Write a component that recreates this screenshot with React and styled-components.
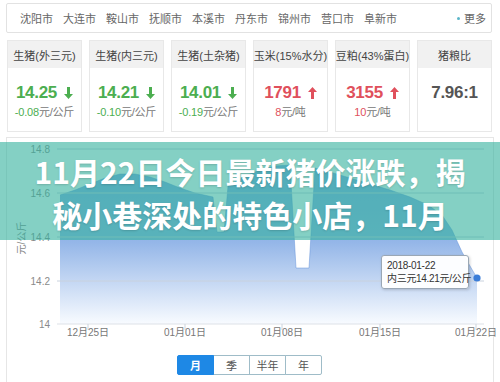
import styled, { createGlobalStyle } from "styled-components";

const GlobalStyle = createGlobalStyle`
	html, body {
		margin: 0;
		padding: 0;
		background: #fff;
		overflow: hidden;
	}
	body {
		font-family: "Liberation Sans", "Noto Sans CJK SC", sans-serif;
	}
`;

const Page = styled.div`
	position: relative;
	width: 500px;
	height: 382px;
	overflow: hidden;
`;

const CityBar = styled.nav`
	display: flex;
	align-items: center;
	gap: 10px;
	height: 28px;
	margin: 3px 8px 0 6px;
	padding: 0 5px 0 13px;
	border: 1px solid #e2e2e2;
	border-radius: 2px;
	font-size: 11px;
	color: #666;
`;

const City = styled.span`
	white-space: nowrap;
`;

const More = styled.span`
	margin-left: auto;
	display: flex;
	align-items: center;
	gap: 4px;

	&::before {
		content: "";
		width: 3px;
		height: 3px;
		border-radius: 50%;
		background: #5bb6c9;
	}
`;

const CardRow = styled.div`
	display: grid;
	grid-template-columns: repeat(6, 75px);
	gap: 7px;
	margin: 7px 0 0 7px;
`;

const Card = styled.div`
	height: 92px;
	box-sizing: border-box;
	border: 1px solid #e8e8e8;
	background: #fff;
`;

const CardHead = styled.div`
	height: 27px;
	background: #f1f1f1;
	display: flex;
	align-items: center;
	justify-content: center;
	font-size: 11px;
	color: #444;
	white-space: nowrap;
`;

const CardBody = styled.div`
	padding-top: 14px;
	text-align: center;
`;

const Value = styled.div`
	display: flex;
	align-items: center;
	justify-content: center;
	gap: 7px;
	height: 22px;
	font-size: 17px;
	font-weight: bold;
	letter-spacing: -0.3px;
	color: ${(p) => p.$color};
`;

const Sub = styled.div`
	font-size: 11px;
	line-height: 16px;
	color: #777;
	letter-spacing: -0.2px;

	b {
		font-weight: normal;
		color: ${(p) => p.$color};
	}
`;

const ChartPanel = styled.section`
	position: relative;
	margin: 5px 6px 0;
	height: 260px;
	border: 1px solid #e6e6e6;
`;

const ChartSvg = styled.svg`
	display: block;
	overflow: visible;
	font-family: "Liberation Sans", "Noto Sans CJK SC", sans-serif;
`;

const RangeGroup = styled.div`
	display: flex;
	justify-content: center;
	margin-top: 9px;
`;

const RangeBtn = styled.button`
	width: 37px;
	height: 20px;
	margin: 0 0 0 -1px;
	padding: 0;
	border: 1px solid ${(p) => (p.$active ? "#1e88e5" : "#9fbcc8")};
	background: ${(p) => (p.$active ? "#1e88e5" : "#fff")};
	color: ${(p) => (p.$active ? "#fff" : "#555")};
	font-weight: ${(p) => (p.$active ? "bold" : "normal")};
	font-size: 11px;
	font-family: "Noto Sans CJK SC", sans-serif;
	line-height: 18px;
	position: relative;
	z-index: ${(p) => (p.$active ? 1 : 0)};

	&:first-child {
		border-radius: 2px 0 0 2px;
	}
	&:last-child {
		border-radius: 0 2px 2px 0;
	}
`;

const Tooltip = styled.div`
	position: absolute;
	left: 374px;
	top: 117px;
	width: 88px;
	height: 34px;
	box-sizing: border-box;
	padding: 3px 4px 3px 5px;
	background: rgba(255, 255, 255, 0.96);
	border: 1px solid #9aa7b5;
	border-radius: 3px;
	box-shadow: 1px 1px 3px rgba(0, 0, 0, 0.18);
	font-size: 10px;
	line-height: 13px;
	letter-spacing: -0.3px;
	color: #333;
	white-space: nowrap;
`;

const Overlay = styled.div`
	position: absolute;
	left: 0;
	top: 142px;
	width: 500px;
	height: 98px;
	box-sizing: border-box;
	padding-top: 8px;
	background: rgba(50, 177, 157, 0.6);
	text-align: center;
	font-family: "Noto Sans CJK SC", sans-serif;
	font-weight: 700;
	font-size: 30px;
	line-height: 43px;
	color: #fff;
	text-shadow: 0 1px 2px rgba(0, 0, 0, 0.15);
	z-index: 5;
`;

const TitleLine = styled.div`
	white-space: nowrap;
`;

const GREEN = "#4cae50";
const RED = "#e0505c";

const Arrow = ({ up, color }) => (
	<svg width="9" height="12" viewBox="0 0 9 12">
		<path
			d={up ? "M3 12 H6 V5 H9 L4.5 0 L0 5 H3 Z" : "M3 0 H6 V7 H9 L4.5 12 L0 7 H3 Z"}
			fill={color}
		/>
	</svg>
);

const cities = ["沈阳市", "大连市", "鞍山市", "抚顺市", "本溪市", "丹东市", "锦州市", "营口市", "阜新市"];

const cards = [
	{ name: "生猪(外三元)", value: "14.25", up: false, diff: "-0.08", unit: "元/公斤" },
	{ name: "生猪(内三元)", value: "14.21", up: false, diff: "-0.10", unit: "元/公斤" },
	{ name: "生猪(土杂猪)", value: "14.01", up: false, diff: "-0.19", unit: "元/公斤" },
	{ name: "玉米(15%水分)", value: "1791", up: true, diff: "8", unit: "元/吨" },
	{ name: "豆粕(43%蛋白)", value: "3155", up: true, diff: "10", unit: "元/吨" },
	{ name: "猪粮比", value: "7.96:1" },
];

// chart, in page pixels
const pts = [
	[60, 195], [75, 190], [90, 184], [105, 178], [120, 174], [135, 174], [150, 177],
	[165, 182], [180, 188], [195, 193], [213, 197], [217, 232], [224, 232], [228, 186],
	[245, 176], [260, 170], [275, 166], [290, 165], [296, 268], [309, 268], [315, 168],
	[330, 172], [350, 178], [370, 184], [390, 190], [410, 197], [428, 205], [442, 215],
	[452, 230], [462, 252], [470, 266], [477, 278],
];
const linePath = pts.map((p, i) => `${i ? "L" : "M"}${p[0]},${p[1]}`).join(" ");
const areaPath = `M60,324 ${linePath.replace("M", "L")} L477,324 Z`;

const yTicks = [
	{ y: 149, label: "14.8" },
	{ y: 193, label: "14.6" },
	{ y: 237, label: "14.4" },
	{ y: 281, label: "14.2" },
	{ y: 324, label: "14" },
];

const xTicks = [
	{ x: 88, label: "12月25日" },
	{ x: 185, label: "01月01日" },
	{ x: 282, label: "01月08日" },
	{ x: 380, label: "01月15日" },
	{ x: 476, label: "01月22日" },
];

const ranges = ["月", "季", "半年", "年"];

const App = () => {
	return (
		<Page>
			<GlobalStyle />
			<CityBar>
				{cities.map((c) => (
					<City key={c}>{c}</City>
				))}
				<More>更多</More>
			</CityBar>

			<CardRow>
				{cards.map((c) => {
					const color = c.diff ? (c.up ? RED : GREEN) : "#555";
					return (
						<Card key={c.name}>
							<CardHead>{c.name}</CardHead>
							<CardBody>
								<Value $color={color}>
									{c.value}
									{c.diff && <Arrow up={c.up} color={color} />}
								</Value>
								{c.diff && (
									<Sub $color={color}>
										<b>{c.diff}</b>
										{c.unit}
									</Sub>
								)}
							</CardBody>
						</Card>
					);
				})}
			</CardRow>

			<ChartPanel>
				<ChartSvg width="486" height="208" viewBox="7 138 486 208">
					<defs>
						<linearGradient id="fill" x1="0" y1="160" x2="0" y2="324" gradientUnits="userSpaceOnUse">
							<stop offset="0" stopColor="#7ea6e4" />
							<stop offset="0.5" stopColor="#94b6e8" />
							<stop offset="1" stopColor="#f8fbff" />
						</linearGradient>
					</defs>
					<path d={areaPath} fill="url(#fill)" />
					<path d={linePath} fill="none" stroke="rgba(90,140,215,0.45)" strokeWidth="1" />
					{yTicks.map((t) => (
						<g key={t.label}>
							<line x1="57" x2="484" y1={t.y} y2={t.y} stroke={t.y === 324 ? "#dde1e7" : "#c9d2de"} strokeWidth="1" />
							<text x="50" y={t.y + 3.5} textAnchor="end" fontSize="10" fill="#8a8a8a">
								{t.label}
							</text>
						</g>
					))}
					{xTicks.map((t) => (
						<g key={t.label}>
							<line x1={t.x} x2={t.x} y1="324" y2="330" stroke="#ccd3dc" />
							<text x={t.x} y="336" textAnchor="middle" fontSize="10" fill="#777">
								{t.label}
							</text>
						</g>
					))}
					<text
						x="22"
						y="238"
						transform="rotate(-90 22 238)"
						textAnchor="middle"
						fontSize="10"
						fill="#888"
						dy="3"
					>
						元/公斤
					</text>
					<circle cx="477" cy="278" r="3.6" fill="#3b7dd8" />
				</ChartSvg>

				<Tooltip>
					2018-01-22
					<br />
					内三元14.21元/公斤
				</Tooltip>

				<RangeGroup>
					{ranges.map((r, i) => (
						<RangeBtn key={r} $active={i === 0}>
							{r}
						</RangeBtn>
					))}
				</RangeGroup>
			</ChartPanel>

			<Overlay>
				<TitleLine>11月22日今日最新猪价涨跌，揭</TitleLine>
				<TitleLine>秘小巷深处的特色小店，11月</TitleLine>
			</Overlay>
		</Page>
	);
};

export default App;
